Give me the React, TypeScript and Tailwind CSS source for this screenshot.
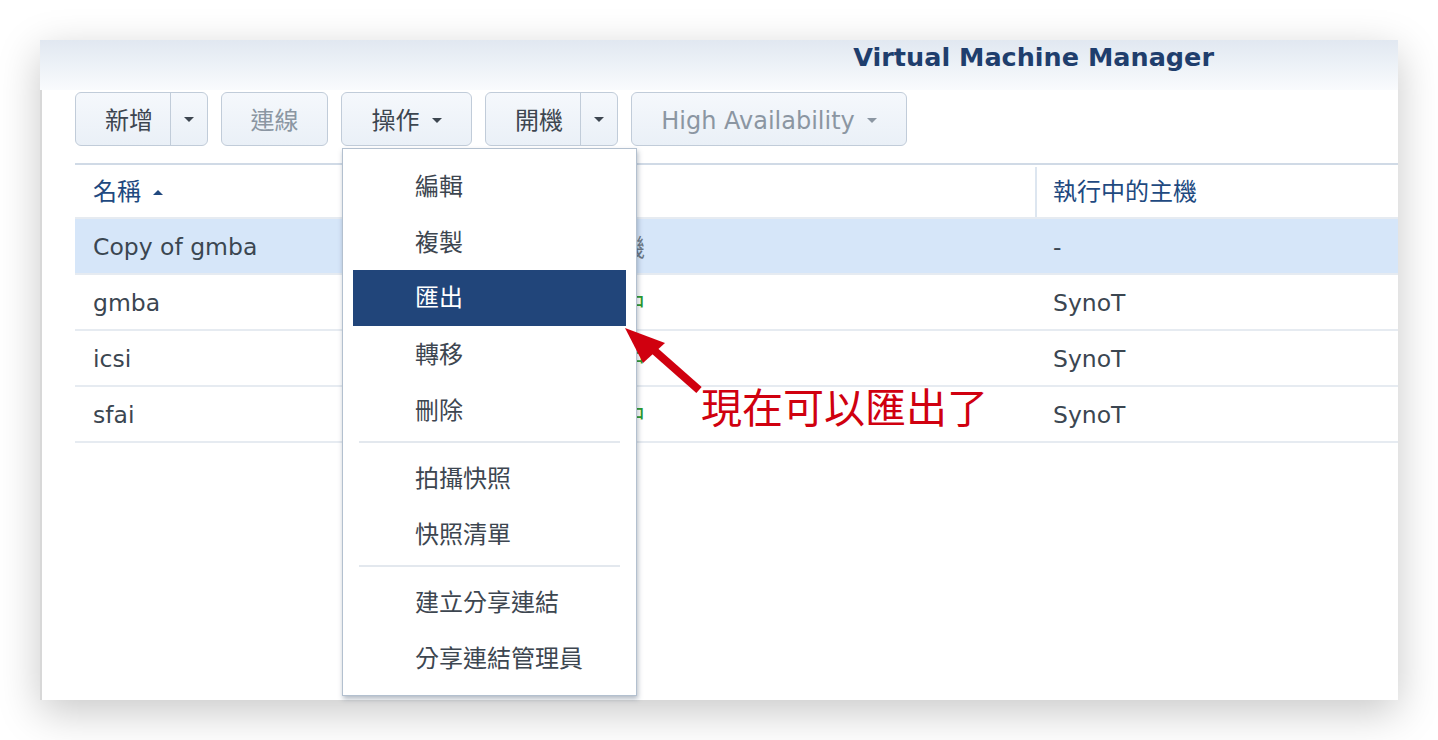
import React from 'react';

const font = { fontFamily: '"DejaVu Sans", "Noto Sans CJK TC", sans-serif' };

type Vm = { name: string; status: string; running: boolean; host: string; selected?: boolean };

const vms: Vm[] = [
  { name: 'Copy of gmba', status: '已關機', running: false, host: '-', selected: true },
  { name: 'gmba', status: '執行中', running: true, host: 'SynoT' },
  { name: 'icsi', status: '執行中', running: true, host: 'SynoT' },
  { name: 'sfai', status: '執行中', running: true, host: 'SynoT' },
];

function Caret({ className = 'border-t-[#3d4650]' }: { className?: string }) {
  return <span className={`inline-block h-0 w-0 border-x-[5px] border-t-[5px] border-x-transparent ${className}`} />;
}

function ToolButton({ label, caret, split, disabled, width }: { label: string; caret?: boolean; split?: boolean; disabled?: boolean; width: string }) {
  const text = disabled ? 'text-[#8b96a2]' : 'text-[#3d4650]';
  return (
    <div className={`flex h-[54px] ${width} items-stretch rounded-[6px] border-[1.5px] border-[#c1ccd9] bg-gradient-to-b from-[#f5f8fc] to-[#eaf0f7]`}>
      <div className={`flex flex-1 items-center justify-center gap-3 pt-[3px] text-[24px] ${split ? 'pl-[12px]' : ''} ${text}`}>
        <span>{label}</span>
        {caret && <Caret className={disabled ? 'border-t-[#8b96a2]' : 'border-t-[#3d4650]'} />}
      </div>
      {split && (
        <div className="flex w-[37px] items-center justify-center border-l-[1.5px] border-[#c1ccd9]">
          <Caret />
        </div>
      )}
    </div>
  );
}

const menuItems: (string | null)[] = ['編輯', '複製', '匯出', '轉移', '刪除', null, '拍攝快照', '快照清單', null, '建立分享連結', '分享連結管理員'];

function ActionMenu() {
  return (
    <div className="absolute left-[342px] top-[148px] w-[295px] border border-[#b3c0cf] bg-white px-[10px] pt-[10px] pb-[8px] shadow-[1px_3px_5px_rgba(40,60,90,0.35)]">
      {menuItems.map((item, i) =>
        item === null ? (
          <div key={i} className="pt-[2px] pb-[8px] px-[6px]">
            <div className="h-[2px] bg-[#e3e8ee]" />
          </div>
        ) : (
          <div
            key={i}
            className={`flex h-[56px] items-center pl-[62px] text-[24px] ${item === '匯出' ? '-mt-[1px] mb-[1px] bg-[#21457a] text-white' : 'text-[#3d4650]'}`}
          >
            {item}
          </div>
        )
      )}
    </div>
  );
}

export default function App() {
  return (
    <div className="relative h-[740px] w-[1438px] overflow-hidden bg-white" style={font}>
      <div className="ml-[40px] mt-[40px] flex h-[660px] w-[1358px] flex-col bg-white shadow-[0_12px_40px_rgba(0,0,0,0.22)]">
        <div className="flex h-[50px] items-start justify-end bg-gradient-to-b from-[#e1e8f1] to-[#f9fbfd] pr-[184px] pt-[5px]">
          <h1 className="text-[25.5px] font-bold leading-none text-[#1f3e6d]">Virtual Machine Manager</h1>
        </div>
        <div className="flex flex-1 flex-col border-l-2 border-[#d8d8d8] pl-[33px]">
          <div className="mt-[2px] flex gap-[13px]">
            <ToolButton label="新增" split width="w-[133px]" />
            <ToolButton label="連線" disabled width="w-[107px]" />
            <ToolButton label="操作" caret width="w-[131px]" />
            <ToolButton label="開機" split width="w-[133px]" />
            <ToolButton label="High Availability" caret disabled width="w-[276px]" />
          </div>

          <div className="mt-[17px] border-t-2 border-[#d0dae6]">
            <div className="flex h-[54px] items-stretch border-b-2 border-[#e6ebf1] pt-[2px] text-[24px] text-[#21497f]">
              <div className="flex w-[480px] items-center gap-3 pl-[18px]">
                <span>名稱</span>
                <Caret className="rotate-180 border-t-[#21497f]" />
              </div>
              <div className="w-[480px]" />
              <div className="flex flex-1 items-center border-l-2 border-[#dde6f0] pl-[16px]">執行中的主機</div>
            </div>
            {vms.map((vm) => (
              <div
                key={vm.name}
                className={`flex h-[56px] items-center border-b-2 border-[#e6ebf1] pt-[3px] text-[23.5px] text-[#3b4651] ${vm.selected ? 'bg-[#d6e6f9]' : 'bg-white'}`}
              >
                <div className="w-[480px] pl-[18px]">{vm.name}</div>
                <div className={`w-[480px] pl-[18px] text-[24px] ${vm.running ? 'text-[#2c9a2c]' : 'text-[#6b7683]'}`}>{vm.status}</div>
                <div className="flex-1 pl-[18px]">{vm.host}</div>
              </div>
            ))}
          </div>
        </div>
      </div>

      <ActionMenu />

      <svg className="absolute left-0 top-0" width="1438" height="740" viewBox="0 0 1438 740">
        <line x1="699" y1="390" x2="648" y2="345" stroke="#d0000f" strokeWidth="8" />
        <polygon points="625,328 665,343 643,363" fill="#d0000f" />
      </svg>

      <div className="absolute left-[701px] top-[389px] text-[41px] leading-none text-[#d0000f]">現在可以匯出了</div>
    </div>
  );
}
